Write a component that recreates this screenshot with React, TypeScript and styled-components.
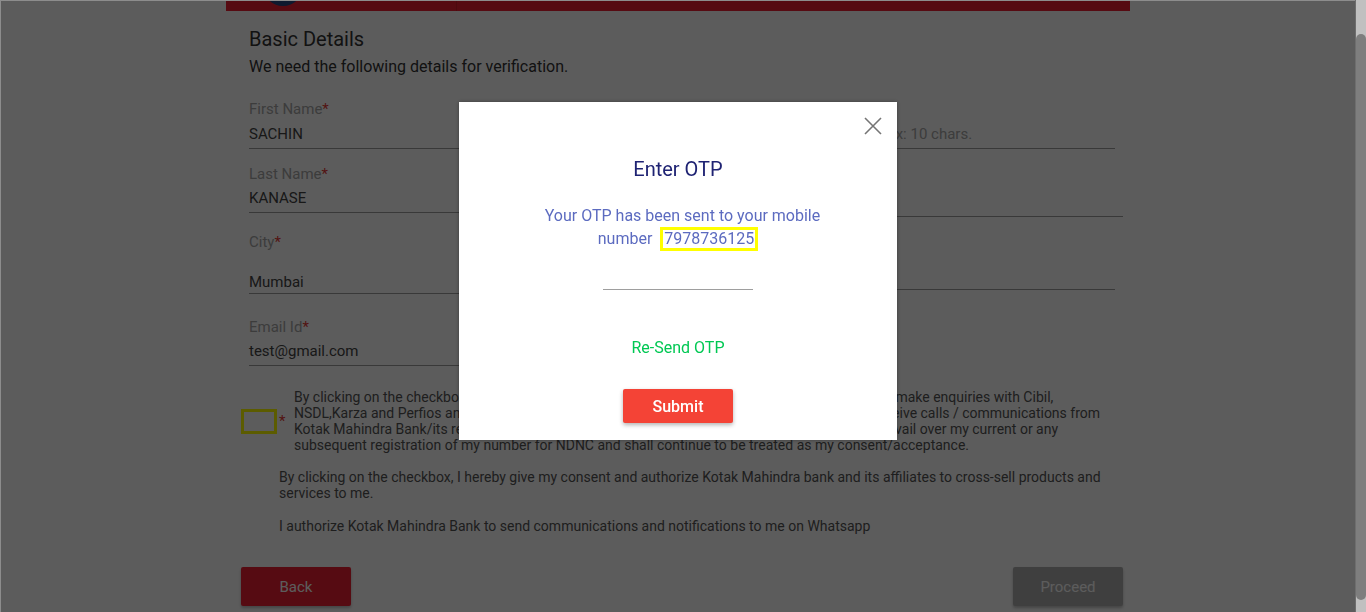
import styled, { createGlobalStyle } from 'styled-components'

const GlobalStyle = createGlobalStyle`
  html, body {
    margin: 0;
    padding: 0;
    background: #fff;
    overflow: hidden;
  }
  body {
    font-family: Roboto, "Liberation Sans", Arial, sans-serif;
  }
  * {
    box-sizing: border-box;
  }
`

type FieldProps = {
  label: string
  value: string
  placeholder?: boolean
  mt: number
  gap: number
  pb: number
  extend?: number
}

const Field = ({ label, value, placeholder, mt, gap, pb, extend }: FieldProps) => (
  <FieldWrap $mt={mt} $extend={extend || 0}>
    <Label>
      {label}
      <Req>*</Req>
    </Label>
    <Value $gap={gap} $pb={pb} $placeholder={!!placeholder}>
      {value}
    </Value>
  </FieldWrap>
)

const CloseIcon = () => (
  <svg width="18" height="18" viewBox="0 0 18 18">
    <path d="M1 1 L17 17 M17 1 L1 17" stroke="#757575" strokeWidth="1.6" fill="none" />
  </svg>
)

const App = () => {
  return (
    <>
      <GlobalStyle />
      <Frame>
        <Page>
          <Header>
            <LogoCell>
              <LogoMark />
            </LogoCell>
          </Header>
          <Content>
            <Title>Basic Details</Title>
            <Subtitle>We need the following details for verification.</Subtitle>
            <Form>
              <Column>
                <Field label="First Name" value="SACHIN" mt={0} gap={3} pb={3} />
                <Field label="Last Name" value="KANASE" mt={14} gap={2} pb={3} />
                <Field label="City" value="Mumbai" mt={18} gap={18} pb={0} />
                <Field label="Email Id" value="test@gmail.com" mt={22} gap={2} pb={3} />
              </Column>
              <Column>
                <Field
                  label="Mobile Number"
                  value="Enter the mobile number, max: 10 chars."
                  placeholder
                  mt={0}
                  gap={3}
                  pb={3}
                />
                <Field label="Date of Birth" value="" mt={18} gap={2} pb={3} extend={8} />
                <Field label="Pincode" value="" mt={23} gap={2} pb={3} />
              </Column>
            </Form>

            <ConsentRow>
              <CheckWrap>
                <CheckBox />
                <Req>*</Req>
              </CheckWrap>
              <ConsentText>
                By clicking on the checkbox, I hereby authorize Kotak Mahindra Bank Limited, and its affiliates, to make enquiries with Cibil,
                <br />
                NSDL,Karza and Perfios and to share the information provided by me with them. I do agree to receive calls / communications from
                <br />
                Kotak Mahindra Bank/its representatives on my mobile number / email and this consent shall prevail over my current or any
                <br />
                subsequent registration of my number for NDNC and shall continue to be treated as my consent/acceptance.
              </ConsentText>
            </ConsentRow>
            <Note $mt={16}>
              By clicking on the checkbox, I hereby give my consent and authorize Kotak Mahindra bank and its affiliates to cross-sell products and
              <br />
              services to me.
            </Note>
            <Note $mt={17}>
              I authorize Kotak Mahindra Bank to send communications and notifications to me on Whatsapp
            </Note>

            <Actions>
              <ActionButton $variant="back">Back</ActionButton>
              <ActionButton $variant="disabled">Proceed</ActionButton>
            </Actions>
          </Content>
        </Page>
      </Frame>

      <Overlay />

      <Modal>
        <CloseButton>
          <CloseIcon />
        </CloseButton>
        <ModalTitle>Enter OTP</ModalTitle>
        <Message>
          Your OTP has been sent to your mobile number <Mobile>7978736125</Mobile>
        </Message>
        <OtpInput />
        <Resend>Re-Send OTP</Resend>
        <SubmitButton>Submit</SubmitButton>
      </Modal>

      <ScrollTrack>
        <ScrollThumb />
      </ScrollTrack>
    </>
  )
}

export default App

const Frame = styled.div`
  height: 612px;
  border-top: 1px solid #8d8d8d;
  border-left: 1px solid #8d8d8d;
  padding-right: 11px;
  background: #fff;
`

const Page = styled.div`
  width: 904px;
  margin: 0 auto;
`

const Header = styled.div`
  display: flex;
  height: 10px;
  background: #ef2132;
  overflow: hidden;
`

const LogoCell = styled.div`
  width: 231px;
  height: 10px;
  border-right: 1px solid rgba(0, 0, 0, 0.12);
`

const LogoMark = styled.div`
  width: 40px;
  height: 40px;
  border-radius: 50%;
  background: #27457f;
  margin: -35px 0 0 37px;
`

const Content = styled.div`
  padding: 0 7px 0 15px;
`

const Title = styled.h2`
  margin: 16px 0 0 8px;
  font-size: 20px;
  line-height: 24px;
  font-weight: 400;
  color: #333;
`

const Subtitle = styled.p`
  margin: 6px 0 0 8px;
  font-size: 16px;
  line-height: 20px;
  color: #333;
`

const Form = styled.div`
  display: grid;
  grid-template-columns: 416px 410px;
  column-gap: 40px;
  margin: 21px 0 0 8px;
`

const Column = styled.div`
  display: flex;
  flex-direction: column;
`

const FieldWrap = styled.div<{ $mt: number; $extend: number }>`
  margin-top: ${p => p.$mt}px;
  margin-right: -${p => p.$extend}px;
`

const Label = styled.div`
  padding-top: 1px;
  font-size: 15px;
  line-height: 20px;
  color: #a6a6a6;
`

const Req = styled.span`
  color: #e53935;
  font-size: 15px;
`

const Value = styled.div<{ $gap: number; $pb: number; $placeholder: boolean }>`
  margin-top: ${p => p.$gap}px;
  padding-top: 1px;
  padding-bottom: ${p => p.$pb}px;
  height: ${p => 23 + p.$pb + 1}px;
  font-size: 15px;
  line-height: 22px;
  color: ${p => (p.$placeholder ? '#a8a8a8' : '#444')};
  border-bottom: 1px solid #9e9e9e;
  white-space: nowrap;
`

const ConsentRow = styled.div`
  display: flex;
  align-items: center;
  margin-top: 23px;
`

const CheckWrap = styled.div`
  display: flex;
  align-items: center;
  width: 53px;
  gap: 2px;
`

const CheckBox = styled.div`
  width: 36px;
  height: 25px;
  border: 3px solid #ffff00;
`

const ConsentText = styled.p`
  margin: 0;
  font-size: 14px;
  line-height: 16px;
  color: #555;
  white-space: nowrap;
`

const Note = styled.p<{ $mt: number }>`
  margin: ${p => p.$mt}px 0 0 38px;
  font-size: 14px;
  line-height: 16px;
  color: #555;
  white-space: nowrap;
`

const Actions = styled.div`
  display: flex;
  justify-content: space-between;
  margin-top: 33px;
`

const ActionButton = styled.button<{ $variant: 'back' | 'disabled' }>`
  width: 110px;
  height: 39px;
  border: none;
  border-radius: 2px;
  font-family: inherit;
  font-size: 15px;
  color: #fff;
  background: ${p => (p.$variant === 'back' ? '#ef2132' : '#b0b0b0')};
  box-shadow: 0 2px 3px rgba(0, 0, 0, 0.25);
`

const Overlay = styled.div`
  position: fixed;
  top: 1px;
  left: 1px;
  right: 11px;
  bottom: 0;
  background: rgba(0, 0, 0, 0.64);
`

const Modal = styled.div`
  position: fixed;
  top: 102px;
  left: 459px;
  width: 438px;
  height: 338px;
  background: #fff;
  box-shadow: 0 0 4px rgba(0, 0, 0, 0.35);
  display: flex;
  flex-direction: column;
  align-items: center;
  padding-top: 53px;
`

const CloseButton = styled.div`
  position: absolute;
  top: 15px;
  right: 15px;
  width: 18px;
  height: 18px;
  display: flex;
`

const ModalTitle = styled.div`
  font-size: 20px;
  line-height: 28px;
  color: #1f2373;
`

const Message = styled.div`
  width: 300px;
  margin-top: 22px;
  text-align: center;
  text-indent: 9px;
  font-size: 16px;
  line-height: 22px;
  color: #5c6bc0;
`

const Mobile = styled.span`
  display: inline-block;
  margin-left: 4px;
  padding: 0 1px;
  line-height: 18px;
  text-indent: 0;
  border: 3px solid #ffff00;
`

const OtpInput = styled.div`
  width: 150px;
  height: 30px;
  margin-top: 9px;
  border-bottom: 1px solid #9e9e9e;
`

const Resend = styled.div`
  margin-top: 48px;
  font-size: 16px;
  line-height: 20px;
  color: #00c853;
`

const SubmitButton = styled.button`
  margin-top: 31px;
  width: 110px;
  height: 34px;
  border: none;
  border-radius: 2px;
  background: #f44336;
  color: #fff;
  font-family: inherit;
  font-size: 16px;
  font-weight: 500;
  box-shadow: 0 2px 4px rgba(0, 0, 0, 0.3);
`

const ScrollTrack = styled.div`
  position: fixed;
  top: 0;
  right: 0;
  bottom: 0;
  width: 11px;
  background: #c0c0c0;
  border-left: 1px solid #6e6e6e;
  padding: 34px 0 12px;
`

const ScrollThumb = styled.div`
  height: 100%;
  background: #7e7e7e;
  border-radius: 5px;
`
